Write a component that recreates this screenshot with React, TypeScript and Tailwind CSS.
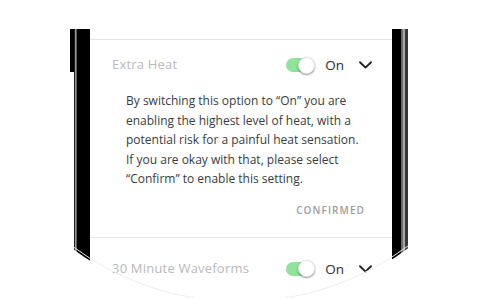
import React from "react";

const font = { fontFamily: '"Open Sans", "Liberation Sans", sans-serif' };

function Toggle() {
  return (
    <div className="relative w-[29px] h-[17px] flex items-center">
      <div className="w-[26px] h-[14px] rounded-full bg-[#8fe39b]" />
      <div className="absolute right-0 top-0 w-[17px] h-[17px] rounded-full bg-white shadow-[0_1px_2px_rgba(0,0,0,0.45)] border border-[#e6e6e6]" />
    </div>
  );
}

function Chevron() {
  return (
    <svg width="13" height="8" viewBox="0 0 13 8" fill="none">
      <path d="M1 1.2 L6.5 6.6 L12 1.2" stroke="#222" strokeWidth="1.9" strokeLinecap="round" strokeLinejoin="round" />
    </svg>
  );
}

function Row({ label }: { label: string }) {
  return (
    <div className="flex items-center pl-[22px] pr-[20px]">
      <span className="text-[13px] text-[#b9b9b9] tracking-[0.2px]">{label}</span>
      <div className="ml-auto flex items-center">
        <Toggle />
        <span className="ml-[10px] text-[13.5px] text-[#2a2a2a]">On</span>
        <div className="ml-[15px] flex items-center">
          <Chevron />
        </div>
      </div>
    </div>
  );
}

export default function App() {
  return (
    <div className="relative w-[480px] h-[298px] bg-white overflow-hidden" style={font}>
      <div className="absolute left-[-41px] top-[-258px] w-[562px] h-[562px] rounded-full overflow-hidden bg-white pl-[111px] pt-[287px]">
        <div className="flex h-[300px] w-[338px]">
          {/* left frame */}
          <div className="flex w-[20px] h-full">
            <div className="w-[4px] h-[43px] bg-black" />
            <div className="w-[16px] h-full bg-[linear-gradient(to_right,#1a1a1a_0px,#1a1a1a_1px,#9a9a9a_1px,#9a9a9a_2px,#5a5a5a_2px,#5a5a5a_3px,#000_3px)]" />
          </div>
          {/* screen */}
          <div className="w-[302px] h-full bg-white pt-[10px]">
            <div className="border-t border-[#e4e4e4]">
              <div className="pt-[15px] h-[48px]">
                <Row label="Extra Heat" />
              </div>
              <p className="mt-[3px] pl-[36px] text-[12px] leading-[19.5px] text-[#383c40]">
                By switching this option to “On” you are
                <br />
                enabling the highest level of heat, with a
                <br />
                potential risk for a painful heat sensation.
                <br />
                If you are okay with that, please select
                <br />
                “Confirm” to enable this setting.
              </p>
              <div className="mt-[14px] pr-[27px] flex justify-end">
                <span className="text-[10px] leading-[14px] font-semibold tracking-[1.1px] text-[#9c9c9c]">CONFIRMED</span>
              </div>
              <div className="mt-[20px] border-t border-[#e4e4e4] pt-[21px]">
                <Row label="30 Minute Waveforms" />
              </div>
            </div>
          </div>
          {/* right frame */}
          <div className="w-[16px] h-full bg-[linear-gradient(to_right,#000_0px,#000_9px,#6a6a6a_9px,#6a6a6a_11px,#a8a8a8_11px,#a8a8a8_13px,#383838_13px)]" />
        </div>
      </div>
      <svg className="absolute inset-0 pointer-events-none" width="480" height="298" viewBox="0 0 480 298">
        <path d="M72 246 A281 281 0 0 0 408 246" fill="none" stroke="#ececec" strokeWidth="1" />
      </svg>
    </div>
  );
}
